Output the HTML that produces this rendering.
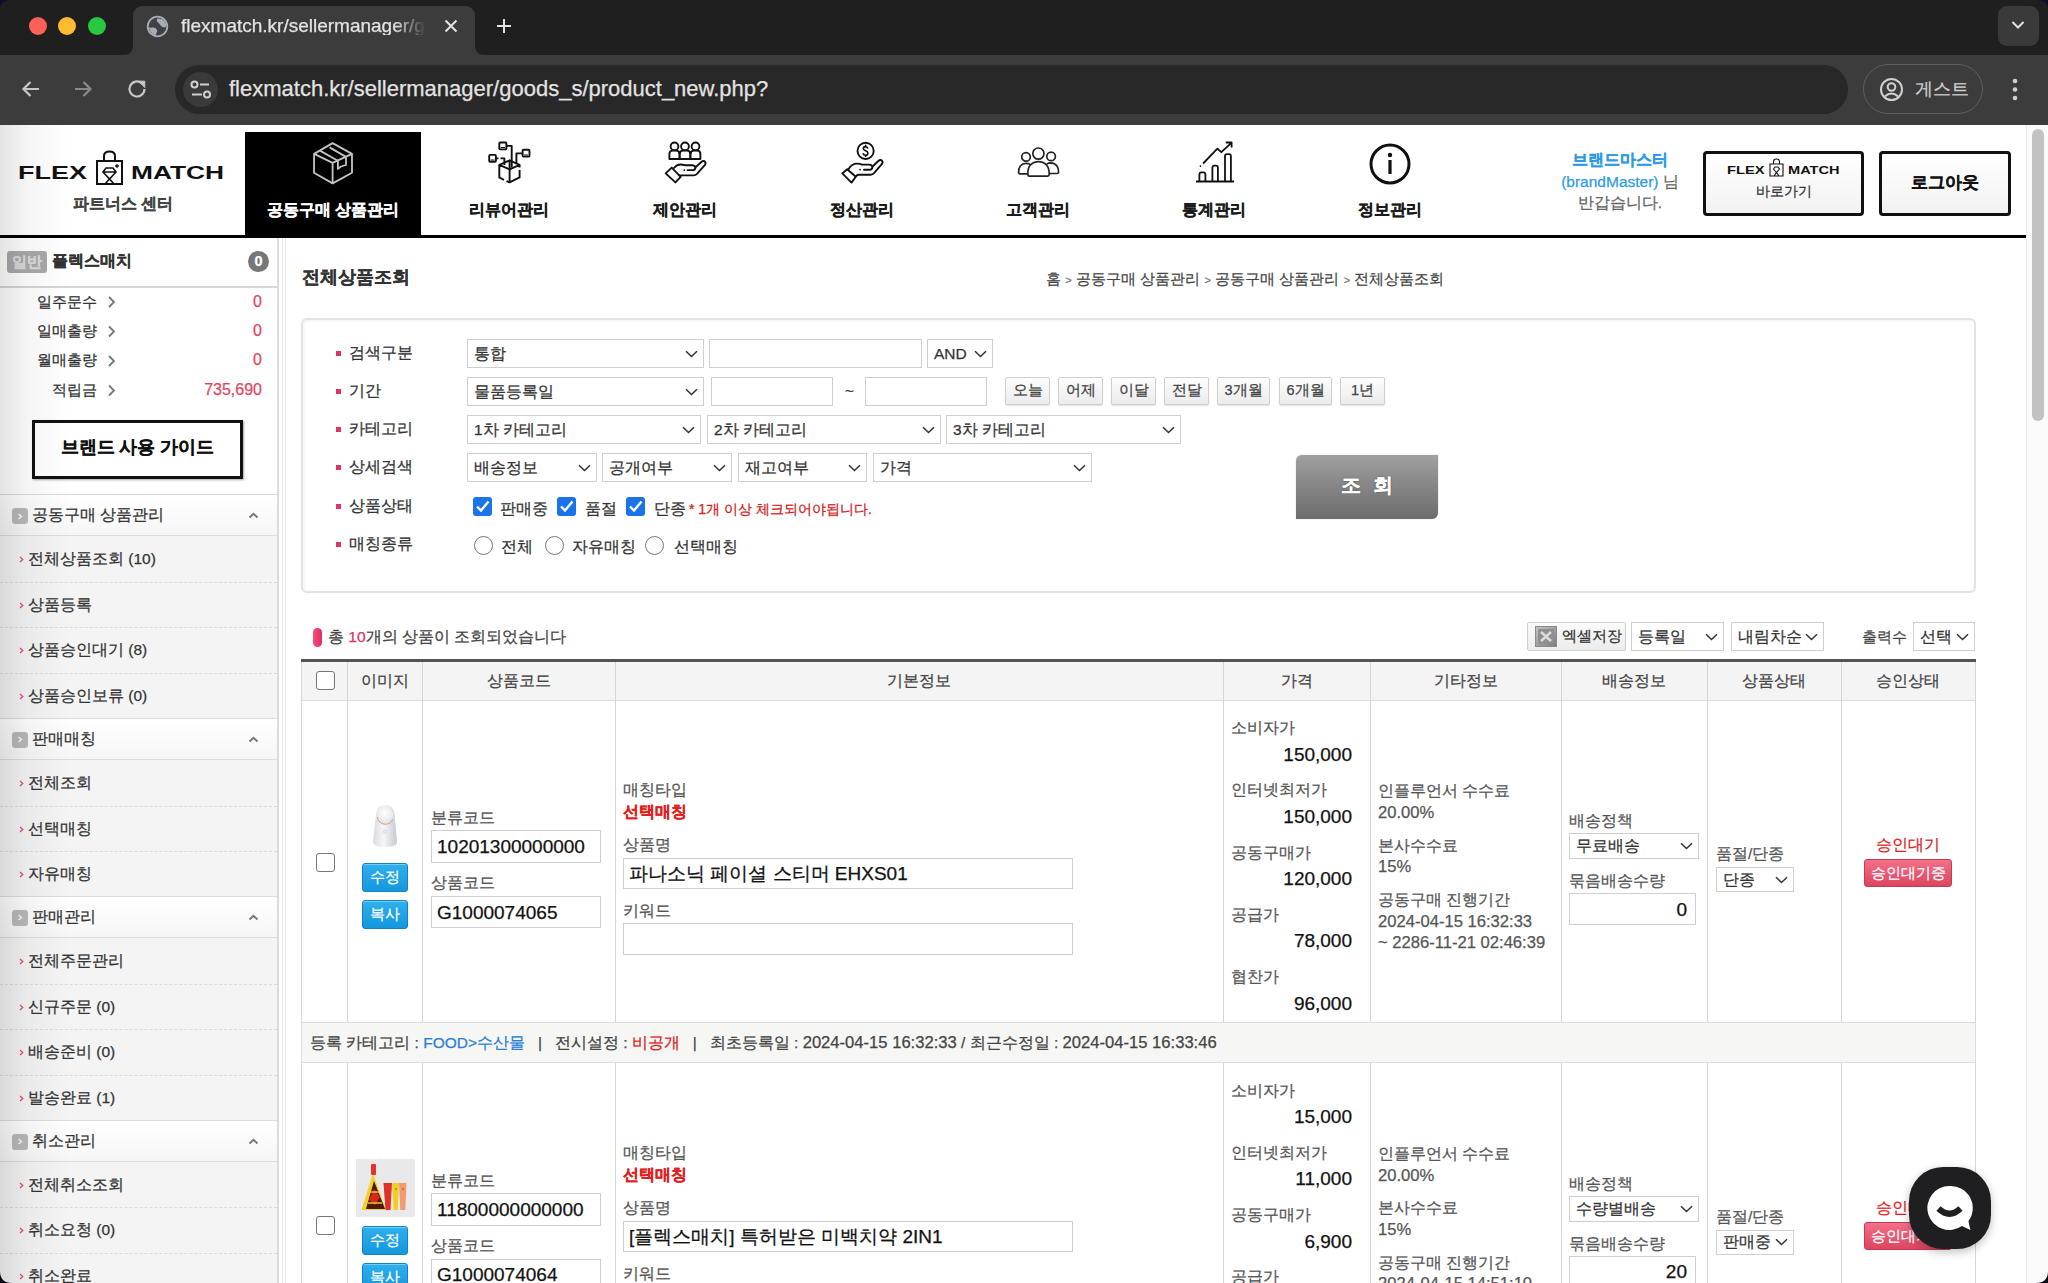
<!DOCTYPE html>
<html><head><meta charset="utf-8">
<style>
*{box-sizing:border-box;margin:0;padding:0}
html,body{width:2048px;height:1283px;overflow:hidden;background:#fff;font-family:"Liberation Sans",sans-serif;color:#333}
.a{position:absolute}
.t{position:absolute;white-space:nowrap;line-height:1;-webkit-text-stroke:0.25px currentColor}
/* chrome */
#tabs{left:0;top:0;width:2048px;height:55px;background:#1f1f1f}
#tb{left:0;top:55px;width:2048px;height:70px;background:#3c3c3c}
.dot{position:absolute;width:18px;height:18px;border-radius:50%}
#tab{left:133px;top:6px;width:342px;height:60px;background:#3c3c3c;border-radius:9px 9px 0 0}
#url{left:175px;top:65px;width:1673px;height:49px;background:#282828;border-radius:25px}
/* header */
.nav{position:absolute;top:132px;width:176px;height:103px;text-align:center}
.nav .lb{position:absolute;left:0;width:100%;top:70px;font-size:15.5px;font-weight:bold;color:#1a1a1a;line-height:1;-webkit-text-stroke:0.3px currentColor}
.nav svg{position:absolute;left:50%;top:10px;transform:translateX(-50%)}
</style></head><body>
<!-- browser chrome -->
<div class="a" id="tabs"></div>
<div class="a" id="tb"></div>
<div class="a" id="tab"></div>
<div class="dot" style="left:29px;top:17px;background:#fe5f57"></div>
<div class="dot" style="left:58px;top:17px;background:#febc2e"></div>
<div class="dot" style="left:88px;top:17px;background:#28c840"></div>
<svg class="a" style="left:123px;top:45px" width="10" height="10" viewBox="0 0 10 10"><path d="M10 0V10H0Q10 10 10 0Z" fill="#3c3c3c"/></svg>
<svg class="a" style="left:475px;top:45px" width="10" height="10" viewBox="0 0 10 10"><path d="M0 0V10H10Q0 10 0 0Z" fill="#3c3c3c"/></svg>
<div class="a" id="url"></div>
<!-- tab contents -->
<svg class="a" style="left:146px;top:15px" width="23" height="23" viewBox="0 0 23 23"><circle cx="11.5" cy="11.5" r="9" fill="#3e4146"/><path d="M11.5 3.5Q16 3 19 6.5Q20.5 9 20 11.5Q18.5 13 16.5 12Q14.5 11 13.5 9Q12.5 7.5 11 6.5Q10 5 11.5 3.5Z" fill="#a9acb1"/><path d="M3.2 12Q4.5 13 6.5 12.5Q9 12 10.5 14Q12 16 10.5 18Q9.5 19.5 9.8 20.3Q6 19.5 4 16Q3.2 14 3.2 12Z" fill="#a9acb1"/><circle cx="11.5" cy="11.5" r="9.8" stroke="#a9acb1" stroke-width="1.8" fill="none"/></svg>
<div class="t" style="left:181px;top:16px;font-size:19px;color:#e3e3e3;width:250px;overflow:hidden;-webkit-mask-image:linear-gradient(to right,#000 85%,transparent 98%)">flexmatch.kr/sellermanager/goods_s/</div>
<svg class="a" style="left:444px;top:19px" width="14" height="14" viewBox="0 0 14 14"><path d="M1.5 1.5L12.5 12.5M12.5 1.5L1.5 12.5" stroke="#e3e3e3" stroke-width="2"/></svg>
<svg class="a" style="left:496px;top:18px" width="16" height="16" viewBox="0 0 16 16"><path d="M8 1V15M1 8H15" stroke="#e3e3e3" stroke-width="2"/></svg>
<div class="a" style="left:1998px;top:6px;width:41px;height:40px;border-radius:9px;background:#3a3a3a"></div>
<svg class="a" style="left:2011px;top:20px" width="14" height="10" viewBox="0 0 14 10"><path d="M1.5 2L7 7.5L12.5 2" stroke="#e3e3e3" stroke-width="2" fill="none"/></svg>
<!-- toolbar -->
<svg class="a" style="left:21px;top:79px" width="20" height="20" viewBox="0 0 20 20"><path d="M18 10H3M9.5 3L2.5 10L9.5 17" stroke="#c7c7c7" stroke-width="2.2" fill="none"/></svg>
<svg class="a" style="left:73px;top:79px" width="20" height="20" viewBox="0 0 20 20"><path d="M2 10H17M10.5 3L17.5 10L10.5 17" stroke="#8a8a8a" stroke-width="2.2" fill="none"/></svg>
<svg class="a" style="left:126px;top:78px" width="22" height="22" viewBox="0 0 22 22"><path d="M18.5 11A7.5 7.5 0 1 1 15.8 5.2" stroke="#c7c7c7" stroke-width="2.2" fill="none"/><path d="M12.5 3.2H18.8V9.5Z" fill="#c7c7c7" stroke="#c7c7c7" stroke-width="1"/></svg>
<div class="a" style="left:183px;top:72px;width:35px;height:35px;border-radius:50%;background:#3a3a3a"></div>
<svg class="a" style="left:188px;top:78px" width="26" height="24" viewBox="0 0 26 24"><circle cx="6.5" cy="6.5" r="3" stroke="#d0d0d0" stroke-width="2" fill="none"/><path d="M12 6.5H21M4 16.5H14" stroke="#d0d0d0" stroke-width="2.2"/><circle cx="19" cy="16.5" r="3" stroke="#d0d0d0" stroke-width="2" fill="none"/></svg>
<div class="t" style="left:229px;top:78px;font-size:22px;color:#e3e3e3">flexmatch.kr/sellermanager/goods_s/product_new.php?</div>
<div class="a" style="left:1863px;top:64px;width:120px;height:50px;border-radius:25px;border:1.5px solid #5f5f5f"></div>
<svg class="a" style="left:1879px;top:77px" width="25" height="25" viewBox="0 0 25 25"><circle cx="12.5" cy="12.5" r="10.5" stroke="#d0d0d0" stroke-width="2" fill="none"/><circle cx="12.5" cy="10" r="3.8" stroke="#d0d0d0" stroke-width="2" fill="none"/><path d="M5.8 19.5Q12.5 13.5 19.2 19.5" stroke="#d0d0d0" stroke-width="2" fill="none"/></svg>
<div class="t" style="left:1915px;top:80px;font-size:18px;color:#d0d0d0">게스트</div>
<svg class="a" style="left:2011px;top:78px" width="8" height="24" viewBox="0 0 8 24"><circle cx="4" cy="3" r="2.3" fill="#d0d0d0"/><circle cx="4" cy="11.5" r="2.3" fill="#d0d0d0"/><circle cx="4" cy="20" r="2.3" fill="#d0d0d0"/></svg>


<!-- page header -->
<div class="a" style="left:245px;top:132px;width:176px;height:103px;background:#000"></div>
<div class="a" style="left:0;top:235px;width:2026px;height:3px;background:#000"></div>
<!-- logo -->
<svg class="a" style="left:0;top:150px" width="90" height="36"><text x="18" y="28.5" font-family="Liberation Sans" font-weight="bold" font-size="18" fill="#111" textLength="69" lengthAdjust="spacingAndGlyphs">FLEX</text></svg>
<svg class="a" style="left:95px;top:150px" width="29" height="36" viewBox="0 0 29 36"><path d="M2 11H27V34H2Z" stroke="#111" stroke-width="2" fill="none"/><path d="M9 11V6Q9 1.5 14.5 1.5Q20 1.5 20 6V11" stroke="#111" stroke-width="2" fill="none"/><path d="M8 22L11 18H18L21 22L14.5 29Z M8 22H21 M10 34L14.5 29L19 34" stroke="#111" stroke-width="1.6" fill="none"/><path d="M22 14V18M20 16H24" stroke="#111" stroke-width="1.3"/></svg>
<svg class="a" style="left:120px;top:150px" width="110" height="36"><text x="11" y="28.5" font-family="Liberation Sans" font-weight="bold" font-size="18" fill="#111" textLength="93" lengthAdjust="spacingAndGlyphs">MATCH</text></svg>
<div class="t" style="left:73px;top:196px;font-size:15.5px;font-weight:bold;color:#444">파트너스 센터</div>
<!-- nav -->
<div class="nav" style="left:245px"><svg width="46" height="46" viewBox="0 0 46 46" style="top:9px"><g stroke="#c4c4c4" stroke-width="1.8" fill="none" stroke-linejoin="round"><path d="M4.1 12.9L22.6 2.1L42 12.9V31.7L22.6 42.4L4 31.7Z"/><path d="M4.1 12.9L22.6 21.9L42 12.9M22.6 21.9V42.4"/><path d="M9.9 9.6L27.9 19.7M19.6 6.4L35.9 15.9"/><path d="M27.9 19.7V27.9L31 25.5L36 24V15.9"/></g></svg><div class="lb" style="color:#fff">공동구매 상품관리</div></div>
<div class="nav" style="left:421px"><svg width="46" height="46" viewBox="0 0 46 46" style="top:9px"><g stroke="#111" stroke-width="1.9" fill="none" stroke-linejoin="round"><path d="M23.6 19.3L13.3 23.8V36.4L18 39M20.5 40.2L23.6 41.4L33.6 36.4V29M33.6 26.5V23.8L23.6 19.3V41.4M13.3 23.8L23.6 28.3L33.6 23.8"/><path d="M20.4 4.9H25.7V26.6M36.6 12.4H30.4V21.9M9.9 17.4H12.5M14.5 17.4H18.4V24"/><rect x="13.3" y="1.5" width="7.1" height="6.9" rx="1"/><rect x="36.6" y="8.8" width="6.9" height="6.8" rx="1"/><rect x="3.2" y="13.9" width="6.7" height="6.9" rx="1"/><path d="M14.8 6.5H19M38 14H42M4.6 19H8.5" stroke-width="1.2"/></g></svg><div class="lb">리뷰어관리</div></div>
<div class="nav" style="left:597px"><svg width="46" height="46" viewBox="0 0 46 46" style="top:9px"><g stroke="#111" stroke-width="1.9" fill="none" stroke-linejoin="round" stroke-linecap="round"><circle cx="12.5" cy="5.4" r="3.9"/><circle cx="23" cy="5.4" r="3.9"/><circle cx="33.5" cy="5.4" r="3.9"/><path d="M7.4 18V13Q7.4 9.6 11 9.6H14Q17.4 9.6 17.4 13V18M17.8 18V13Q17.8 9.6 21 9.6H25Q28.2 9.6 28.2 13V18M28.6 18V13Q28.6 9.6 32 9.6H35Q38.4 9.6 38.4 13V18Z M7.4 18H38.4"/><path d="M3.7 32.4L9.7 26.6L18.7 35.8L13.4 41.4Z"/><path d="M11.9 27Q15 23.3 19 23.5Q22 24.2 24 24.2H30.3Q33.3 24.5 33.4 27Q33 29.1 30.5 29.1H25.6"/><path d="M17.6 34.4H31.6Q33.6 34.3 35 32.8L43.2 23.6Q44.2 21.5 42.5 20.2Q41 19.5 39.6 20.8L34.1 25.7"/><circle cx="22.3" cy="29.2" r="0.9" fill="#111" stroke="none"/></g></svg><div class="lb">제안관리</div></div>
<div class="nav" style="left:774px"><svg width="46" height="46" viewBox="0 0 46 46" style="top:9px"><g stroke="#111" stroke-width="1.9" fill="none" stroke-linejoin="round" stroke-linecap="round"><circle cx="26.6" cy="9.9" r="8.1"/><path d="M28.7 7Q28 5.6 26.5 5.6Q24.3 5.7 24.3 7.4Q24.4 9 26.6 9.8Q28.9 10.6 28.9 12.4Q28.8 14.2 26.6 14.2Q25 14.2 24.3 12.8M26.6 4.3V5.6M26.6 14.2V15.5" stroke-width="1.6"/><path d="M3.3 32.4L8.2 28.3L16.8 35.8L12.5 41.6Z"/><path d="M9.6 28Q13 22.5 18 22.6Q21 22.8 23 23.6H30.3Q33.3 23.9 33.4 26.3Q33 28.7 30.5 28.7H25"/><path d="M16.8 35.4Q18 34 19.5 33.8H31.6Q33.6 33.7 35 32.2L43.2 22.6Q44.2 20.5 42.5 19.2Q41 18.5 39.6 19.8L34.1 25"/><circle cx="21" cy="28.6" r="0.9" fill="#111" stroke="none"/></g></svg><div class="lb">정산관리</div></div>
<div class="nav" style="left:950px"><svg width="46" height="46" viewBox="0 0 46 46" style="top:9px"><g stroke="#222" stroke-width="1.7" fill="none" stroke-linejoin="round"><circle cx="23.4" cy="12.6" r="5.6"/><circle cx="11" cy="15.9" r="4.3"/><circle cx="36.1" cy="15.4" r="4.3"/><path d="M14.2 35.1Q13 35 12.9 33.6Q12.5 27 15.5 24Q18.5 20.6 23.4 20.6Q28.5 20.6 31.5 24Q34.3 27 34.2 33.6Q34 35 32.8 35.1Z"/><path d="M15.3 23.6Q13.5 22.3 11 22.3Q7.5 22.3 5.3 25Q3.5 27.5 3.6 31.6Q3.8 32.8 5 32.8H12.9"/><path d="M31.6 23.1Q33.5 21.9 35.9 21.9Q39.5 22 41.7 24.6Q43.5 27 43.6 31.4Q43.4 32.5 42.3 32.5H34.2"/></g></svg><div class="lb">고객관리</div></div>
<div class="nav" style="left:1126px"><svg width="46" height="46" viewBox="0 0 46 46" style="top:9px"><g stroke="#111" stroke-width="1.8" fill="none" stroke-linejoin="round"><path d="M5 40.5H43.1"/><path d="M8.4 40.5V33.3Q8.4 31.3 10.4 31.3H12.4Q14.4 31.3 14.4 33.3V40.5M21.4 40.5V26.6Q21.4 24.6 23.4 24.6H24.9Q26.9 24.6 26.9 26.6V40.5M34 40.5V15.1Q34 13.1 36 13.1H37.9Q39.9 13.1 39.9 15.1V40.5"/><path d="M12.1 22.5L26.4 7.7L30.3 11.1L40.4 1.9M34.8 1.5H40.6V6.4"/></g><circle cx="9.5" cy="25.1" r="0.9" fill="#111"/></svg><div class="lb">통계관리</div></div>
<div class="nav" style="left:1302px"><svg width="46" height="46" viewBox="0 0 46 46" style="top:9px"><circle cx="23" cy="23" r="19" stroke="#111" stroke-width="3" fill="none"/><circle cx="23" cy="14" r="2.2" fill="#111"/><path d="M23 19V33" stroke="#111" stroke-width="3.2"/></svg><div class="lb">정보관리</div></div>
<!-- right header -->
<div class="t" style="left:1560px;top:152px;width:120px;text-align:center;font-size:15.5px;font-weight:bold;color:#2e9ae6">브랜드마스터</div>
<div class="t" style="left:1540px;top:174px;width:160px;text-align:center;font-size:15.5px;color:#666"><span style="color:#2e9ae6">(brandMaster)</span> 님</div>
<div class="t" style="left:1540px;top:195px;width:160px;text-align:center;font-size:15.5px;color:#666">반갑습니다.</div>
<div class="a" style="left:1703px;top:151px;width:161px;height:65px;border:3px solid #111;border-radius:4px;background:linear-gradient(#fff,#f2f2f2)"></div>
<svg class="a" style="left:1720px;top:160px" width="50" height="20"><text x="7" y="14" font-family="Liberation Sans" font-weight="bold" font-size="10.5" fill="#111" textLength="37.5" lengthAdjust="spacingAndGlyphs">FLEX</text></svg>
<svg class="a" style="left:1769px;top:158px" width="15" height="19" viewBox="0 0 15 19"><path d="M1 6H14V18H1Z M4.5 6V3.5Q4.5 1 7.5 1Q10.5 1 10.5 3.5V6 M4.5 11L6 9H9L10.5 11L7.5 14.5Z M5 18L7.5 14.5L10 18" stroke="#111" stroke-width="1.1" fill="none"/></svg>
<svg class="a" style="left:1780px;top:160px" width="70" height="20"><text x="8" y="14" font-family="Liberation Sans" font-weight="bold" font-size="10.5" fill="#111" textLength="51.5" lengthAdjust="spacingAndGlyphs">MATCH</text></svg>
<div class="t" style="left:1703px;top:184px;width:161px;text-align:center;font-size:14px;color:#333">바로가기</div>
<div class="a" style="left:1879px;top:151px;width:132px;height:65px;border:3px solid #111;border-radius:4px;background:linear-gradient(#fff,#f2f2f2)"></div>
<div class="t" style="left:1879px;top:174px;width:132px;text-align:center;font-size:17px;font-weight:bold;color:#111">로그아웃</div>
<!-- scrollbar -->
<div class="a" style="left:2026px;top:125px;width:22px;height:1158px;background:#fafafa;border-left:1px solid #e8e8e8"></div>
<div class="a" style="left:2032px;top:129px;width:12px;height:292px;border-radius:6px;background:#c2c2c2"></div>

<!-- sidebar -->
<div class="a" style="left:277px;top:238px;width:1.5px;height:1045px;background:#dcdcdc"></div>
<div class="a" style="left:282px;top:238px;width:1px;height:1045px;background:#e6e6e6"></div>
<div class="a" style="left:285px;top:238px;width:1.2px;height:1045px;background:#e6e6e6"></div>
<div class="a" style="left:7px;top:251px;width:40px;height:22px;border-radius:3px;background:#a9a9a9"></div>
<div class="t" style="left:7px;top:254px;width:40px;text-align:center;font-size:15px;font-weight:bold;color:#d9d9d9">일반</div>
<div class="t" style="left:52px;top:253px;font-size:15.5px;font-weight:bold;color:#333">플렉스매치</div>
<div class="a" style="left:248px;top:251px;width:21px;height:21px;border-radius:50%;background:#777"></div>
<div class="t" style="left:248px;top:254px;width:21px;text-align:center;font-size:14.5px;font-weight:bold;color:#fff">0</div>
<div class="a" style="left:0;top:286px;width:277px;height:2px;background:#d6d6d6"></div>
<div class="a" style="left:0;top:288px;width:277px;height:206px;background:#fff"></div>
<div class="t" style="left:37px;top:294px;font-size:15px;color:#333">일주문수</div>
<div class="t" style="left:37px;top:323px;font-size:15px;color:#333">일매출량</div>
<div class="t" style="left:37px;top:352px;font-size:15px;color:#333">월매출량</div>
<div class="t" style="left:52px;top:382px;font-size:15px;color:#333">적립금</div>
<svg class="a" style="left:107px;top:296px" width="10" height="104" viewBox="0 0 10 104"><g stroke="#777" stroke-width="1.8" fill="none"><path d="M2 1L7 6L2 11"/><path d="M2 30.5L7 35.5L2 40.5"/><path d="M2 60L7 65L2 70"/><path d="M2 89.5L7 94.5L2 99.5"/></g></svg>
<div class="t" style="left:160px;top:294px;width:102px;text-align:right;font-size:16px;color:#e0475f">0</div>
<div class="t" style="left:160px;top:323px;width:102px;text-align:right;font-size:16px;color:#e0475f">0</div>
<div class="t" style="left:160px;top:352px;width:102px;text-align:right;font-size:16px;color:#e0475f">0</div>
<div class="t" style="left:160px;top:382px;width:102px;text-align:right;font-size:16px;color:#e0475f">735,690</div>
<div class="a" style="left:32px;top:420px;width:211px;height:59px;border:3px solid #111;background:#fff;box-shadow:1px 1px 2px rgba(0,0,0,.35)"></div>
<div class="t" style="left:32px;top:439px;width:211px;text-align:center;font-size:17.5px;font-weight:bold;color:#111">브랜드 사용 가이드</div>
<div class="a" style="left:0;top:494px;width:277px;height:1.5px;background:#d8d8d8"></div>
<div class="a" style="left:0;top:495.0px;width:277px;height:41px;background:linear-gradient(#fff,#f6f6f6);border-bottom:1.5px solid #dcdcdc"></div>
<div class="a" style="left:12px;top:508.0px;width:16px;height:16px;border-radius:3px;background:#b9b9b9"></div>
<svg class="a" style="left:17px;top:512.5px" width="6" height="7" viewBox="0 0 6 7"><path d="M1.5 1L4.5 3.5L1.5 6" stroke="#fff" stroke-width="1.3" fill="none"/></svg>
<div class="t" style="left:32px;top:507.0px;font-size:15.5px;color:#333">공동구매 상품관리</div>
<svg class="a" style="left:248px;top:512.0px" width="11" height="7" viewBox="0 0 11 7"><path d="M1.5 5.5L5.5 1.8L9.5 5.5" stroke="#777" stroke-width="2" fill="none"/></svg>
<div class="a" style="left:0;top:536.0px;width:277px;height:182.8px;background:#f4f4f4"></div>
<svg class="a" style="left:19px;top:556.0px" width="5" height="7" viewBox="0 0 5 7"><path d="M1 1L3.8 3.5L1 6" stroke="#e8456a" stroke-width="1.2" fill="none"/></svg>
<div class="t" style="left:28px;top:551.0px;font-size:15.5px;color:#333">전체상품조회 (10)</div>
<div class="a" style="left:0;top:581.7px;width:277px;height:1px;border-top:1px dashed #dadada"></div>
<svg class="a" style="left:19px;top:601.7px" width="5" height="7" viewBox="0 0 5 7"><path d="M1 1L3.8 3.5L1 6" stroke="#e8456a" stroke-width="1.2" fill="none"/></svg>
<div class="t" style="left:28px;top:596.7px;font-size:15.5px;color:#333">상품등록</div>
<div class="a" style="left:0;top:627.4px;width:277px;height:1px;border-top:1px dashed #dadada"></div>
<svg class="a" style="left:19px;top:647.4px" width="5" height="7" viewBox="0 0 5 7"><path d="M1 1L3.8 3.5L1 6" stroke="#e8456a" stroke-width="1.2" fill="none"/></svg>
<div class="t" style="left:28px;top:642.4px;font-size:15.5px;color:#333">상품승인대기 (8)</div>
<div class="a" style="left:0;top:673.1px;width:277px;height:1px;border-top:1px dashed #dadada"></div>
<svg class="a" style="left:19px;top:693.1px" width="5" height="7" viewBox="0 0 5 7"><path d="M1 1L3.8 3.5L1 6" stroke="#e8456a" stroke-width="1.2" fill="none"/></svg>
<div class="t" style="left:28px;top:688.1px;font-size:15.5px;color:#333">상품승인보류 (0)</div>
<div class="a" style="left:0;top:717.8px;width:277px;height:1.5px;background:#dcdcdc"></div>
<div class="a" style="left:0;top:718.8px;width:277px;height:41px;background:linear-gradient(#fff,#f6f6f6);border-bottom:1.5px solid #dcdcdc"></div>
<div class="a" style="left:12px;top:731.8px;width:16px;height:16px;border-radius:3px;background:#b9b9b9"></div>
<svg class="a" style="left:17px;top:736.3px" width="6" height="7" viewBox="0 0 6 7"><path d="M1.5 1L4.5 3.5L1.5 6" stroke="#fff" stroke-width="1.3" fill="none"/></svg>
<div class="t" style="left:32px;top:730.8px;font-size:15.5px;color:#333">판매매칭</div>
<svg class="a" style="left:248px;top:735.8px" width="11" height="7" viewBox="0 0 11 7"><path d="M1.5 5.5L5.5 1.8L9.5 5.5" stroke="#777" stroke-width="2" fill="none"/></svg>
<div class="a" style="left:0;top:759.8px;width:277px;height:137.1px;background:#f4f4f4"></div>
<svg class="a" style="left:19px;top:779.8px" width="5" height="7" viewBox="0 0 5 7"><path d="M1 1L3.8 3.5L1 6" stroke="#e8456a" stroke-width="1.2" fill="none"/></svg>
<div class="t" style="left:28px;top:774.8px;font-size:15.5px;color:#333">전체조회</div>
<div class="a" style="left:0;top:805.5px;width:277px;height:1px;border-top:1px dashed #dadada"></div>
<svg class="a" style="left:19px;top:825.5px" width="5" height="7" viewBox="0 0 5 7"><path d="M1 1L3.8 3.5L1 6" stroke="#e8456a" stroke-width="1.2" fill="none"/></svg>
<div class="t" style="left:28px;top:820.5px;font-size:15.5px;color:#333">선택매칭</div>
<div class="a" style="left:0;top:851.2px;width:277px;height:1px;border-top:1px dashed #dadada"></div>
<svg class="a" style="left:19px;top:871.2px" width="5" height="7" viewBox="0 0 5 7"><path d="M1 1L3.8 3.5L1 6" stroke="#e8456a" stroke-width="1.2" fill="none"/></svg>
<div class="t" style="left:28px;top:866.2px;font-size:15.5px;color:#333">자유매칭</div>
<div class="a" style="left:0;top:895.9px;width:277px;height:1.5px;background:#dcdcdc"></div>
<div class="a" style="left:0;top:896.9px;width:277px;height:41px;background:linear-gradient(#fff,#f6f6f6);border-bottom:1.5px solid #dcdcdc"></div>
<div class="a" style="left:12px;top:909.9px;width:16px;height:16px;border-radius:3px;background:#b9b9b9"></div>
<svg class="a" style="left:17px;top:914.4px" width="6" height="7" viewBox="0 0 6 7"><path d="M1.5 1L4.5 3.5L1.5 6" stroke="#fff" stroke-width="1.3" fill="none"/></svg>
<div class="t" style="left:32px;top:908.9px;font-size:15.5px;color:#333">판매관리</div>
<svg class="a" style="left:248px;top:913.9px" width="11" height="7" viewBox="0 0 11 7"><path d="M1.5 5.5L5.5 1.8L9.5 5.5" stroke="#777" stroke-width="2" fill="none"/></svg>
<div class="a" style="left:0;top:937.9px;width:277px;height:182.8px;background:#f4f4f4"></div>
<svg class="a" style="left:19px;top:957.9px" width="5" height="7" viewBox="0 0 5 7"><path d="M1 1L3.8 3.5L1 6" stroke="#e8456a" stroke-width="1.2" fill="none"/></svg>
<div class="t" style="left:28px;top:952.9px;font-size:15.5px;color:#333">전체주문관리</div>
<div class="a" style="left:0;top:983.6px;width:277px;height:1px;border-top:1px dashed #dadada"></div>
<svg class="a" style="left:19px;top:1003.6px" width="5" height="7" viewBox="0 0 5 7"><path d="M1 1L3.8 3.5L1 6" stroke="#e8456a" stroke-width="1.2" fill="none"/></svg>
<div class="t" style="left:28px;top:998.6px;font-size:15.5px;color:#333">신규주문 (0)</div>
<div class="a" style="left:0;top:1029.3px;width:277px;height:1px;border-top:1px dashed #dadada"></div>
<svg class="a" style="left:19px;top:1049.3px" width="5" height="7" viewBox="0 0 5 7"><path d="M1 1L3.8 3.5L1 6" stroke="#e8456a" stroke-width="1.2" fill="none"/></svg>
<div class="t" style="left:28px;top:1044.3px;font-size:15.5px;color:#333">배송준비 (0)</div>
<div class="a" style="left:0;top:1075.0px;width:277px;height:1px;border-top:1px dashed #dadada"></div>
<svg class="a" style="left:19px;top:1095.0px" width="5" height="7" viewBox="0 0 5 7"><path d="M1 1L3.8 3.5L1 6" stroke="#e8456a" stroke-width="1.2" fill="none"/></svg>
<div class="t" style="left:28px;top:1090.0px;font-size:15.5px;color:#333">발송완료 (1)</div>
<div class="a" style="left:0;top:1119.7px;width:277px;height:1.5px;background:#dcdcdc"></div>
<div class="a" style="left:0;top:1120.7px;width:277px;height:41px;background:linear-gradient(#fff,#f6f6f6);border-bottom:1.5px solid #dcdcdc"></div>
<div class="a" style="left:12px;top:1133.7px;width:16px;height:16px;border-radius:3px;background:#b9b9b9"></div>
<svg class="a" style="left:17px;top:1138.2px" width="6" height="7" viewBox="0 0 6 7"><path d="M1.5 1L4.5 3.5L1.5 6" stroke="#fff" stroke-width="1.3" fill="none"/></svg>
<div class="t" style="left:32px;top:1132.7px;font-size:15.5px;color:#333">취소관리</div>
<svg class="a" style="left:248px;top:1137.7px" width="11" height="7" viewBox="0 0 11 7"><path d="M1.5 5.5L5.5 1.8L9.5 5.5" stroke="#777" stroke-width="2" fill="none"/></svg>
<div class="a" style="left:0;top:1161.7px;width:277px;height:137.1px;background:#f4f4f4"></div>
<svg class="a" style="left:19px;top:1181.7px" width="5" height="7" viewBox="0 0 5 7"><path d="M1 1L3.8 3.5L1 6" stroke="#e8456a" stroke-width="1.2" fill="none"/></svg>
<div class="t" style="left:28px;top:1176.7px;font-size:15.5px;color:#333">전체취소조회</div>
<div class="a" style="left:0;top:1207.4px;width:277px;height:1px;border-top:1px dashed #dadada"></div>
<svg class="a" style="left:19px;top:1227.4px" width="5" height="7" viewBox="0 0 5 7"><path d="M1 1L3.8 3.5L1 6" stroke="#e8456a" stroke-width="1.2" fill="none"/></svg>
<div class="t" style="left:28px;top:1222.4px;font-size:15.5px;color:#333">취소요청 (0)</div>
<div class="a" style="left:0;top:1253.1px;width:277px;height:1px;border-top:1px dashed #dadada"></div>
<svg class="a" style="left:19px;top:1273.1px" width="5" height="7" viewBox="0 0 5 7"><path d="M1 1L3.8 3.5L1 6" stroke="#e8456a" stroke-width="1.2" fill="none"/></svg>
<div class="t" style="left:28px;top:1268.1px;font-size:15.5px;color:#333">취소완료</div>
<div class="a" style="left:0;top:1297.8px;width:277px;height:1.5px;background:#dcdcdc"></div>

<div class="a" style="left:0;top:125px;width:70px;height:1158px;background:linear-gradient(to right,rgba(0,0,0,.11),rgba(0,0,0,.04) 40%,rgba(0,0,0,0))"></div>

<!-- content -->
<div class="t" style="left:302px;top:269px;font-size:17.5px;font-weight:bold;color:#333">전체상품조회</div>
<div class="t" style="left:1046px;top:271px;font-size:15.3px;color:#444">홈 <span style="font-size:11px;color:#777">&gt;</span> 공동구매 상품관리 <span style="font-size:11px;color:#777">&gt;</span> 공동구매 상품관리 <span style="font-size:11px;color:#777">&gt;</span> 전체상품조회</div>
<div class="a" style="left:301px;top:318px;width:1675px;height:275px;border:2.5px solid #e3e3e3;border-radius:6px;box-shadow:inset 1px 1px 3px rgba(0,0,0,.06)"></div>
<div class="a" style="left:336px;top:351px;width:5px;height:5px;background:#e0336a"></div>
<div class="t" style="left:349px;top:345px;font-size:15.5px;color:#333">검색구분</div>
<div class="a" style="left:336px;top:389px;width:5px;height:5px;background:#e0336a"></div>
<div class="t" style="left:349px;top:383px;font-size:15.5px;color:#333">기간</div>
<div class="a" style="left:336px;top:427px;width:5px;height:5px;background:#e0336a"></div>
<div class="t" style="left:349px;top:421px;font-size:15.5px;color:#333">카테고리</div>
<div class="a" style="left:336px;top:465px;width:5px;height:5px;background:#e0336a"></div>
<div class="t" style="left:349px;top:459px;font-size:15.5px;color:#333">상세검색</div>
<div class="a" style="left:336px;top:504px;width:5px;height:5px;background:#e0336a"></div>
<div class="t" style="left:349px;top:498px;font-size:15.5px;color:#333">상품상태</div>
<div class="a" style="left:336px;top:542px;width:5px;height:5px;background:#e0336a"></div>
<div class="t" style="left:349px;top:536px;font-size:15.5px;color:#333">매칭종류</div>
<div class="a" style="left:467px;top:339px;width:237px;height:29px;border:1.5px solid #cfcfcf;background:#fff"></div>
<div class="t" style="left:474px;top:345.5px;font-size:15.5px;color:#333">통합</div>
<svg class="a" style="left:685px;top:349.5px" width="13" height="8" viewBox="0 0 13 8"><path d="M1 1.2L6.5 6.5L12 1.2" stroke="#333" stroke-width="1.5" fill="none"/></svg>
<div class="a" style="left:709px;top:339px;width:213px;height:29px;border:1.5px solid #cfcfcf;background:#fff"></div>
<div class="a" style="left:927px;top:339px;width:66px;height:29px;border:1.5px solid #cfcfcf;background:#fff"></div>
<div class="t" style="left:934px;top:345.5px;font-size:15.5px;color:#333">AND</div>
<svg class="a" style="left:974px;top:349.5px" width="13" height="8" viewBox="0 0 13 8"><path d="M1 1.2L6.5 6.5L12 1.2" stroke="#333" stroke-width="1.5" fill="none"/></svg>
<div class="a" style="left:467px;top:377px;width:237px;height:29px;border:1.5px solid #cfcfcf;background:#fff"></div>
<div class="t" style="left:474px;top:383.5px;font-size:15.5px;color:#333">물품등록일</div>
<svg class="a" style="left:685px;top:387.5px" width="13" height="8" viewBox="0 0 13 8"><path d="M1 1.2L6.5 6.5L12 1.2" stroke="#333" stroke-width="1.5" fill="none"/></svg>
<div class="a" style="left:711px;top:377px;width:122px;height:29px;border:1.5px solid #cfcfcf;background:#fff"></div>
<div class="t" style="left:845px;top:383px;font-size:15px;color:#333">~</div>
<div class="a" style="left:865px;top:377px;width:122px;height:29px;border:1.5px solid #cfcfcf;background:#fff"></div>
<div class="a" style="left:1005px;top:377px;width:45px;height:28px;border:1px solid #cfcfcf;border-radius:2px;background:linear-gradient(#fdfdfd,#ececec);box-shadow:0 1px 1px rgba(0,0,0,.12)"></div>
<div class="t" style="left:1005px;top:383px;width:45px;text-align:center;font-size:14.5px;color:#444">오늘</div>
<div class="a" style="left:1058px;top:377px;width:45px;height:28px;border:1px solid #cfcfcf;border-radius:2px;background:linear-gradient(#fdfdfd,#ececec);box-shadow:0 1px 1px rgba(0,0,0,.12)"></div>
<div class="t" style="left:1058px;top:383px;width:45px;text-align:center;font-size:14.5px;color:#444">어제</div>
<div class="a" style="left:1111px;top:377px;width:45px;height:28px;border:1px solid #cfcfcf;border-radius:2px;background:linear-gradient(#fdfdfd,#ececec);box-shadow:0 1px 1px rgba(0,0,0,.12)"></div>
<div class="t" style="left:1111px;top:383px;width:45px;text-align:center;font-size:14.5px;color:#444">이달</div>
<div class="a" style="left:1164px;top:377px;width:45px;height:28px;border:1px solid #cfcfcf;border-radius:2px;background:linear-gradient(#fdfdfd,#ececec);box-shadow:0 1px 1px rgba(0,0,0,.12)"></div>
<div class="t" style="left:1164px;top:383px;width:45px;text-align:center;font-size:14.5px;color:#444">전달</div>
<div class="a" style="left:1217px;top:377px;width:53px;height:28px;border:1px solid #cfcfcf;border-radius:2px;background:linear-gradient(#fdfdfd,#ececec);box-shadow:0 1px 1px rgba(0,0,0,.12)"></div>
<div class="t" style="left:1217px;top:383px;width:53px;text-align:center;font-size:14.5px;color:#444">3개월</div>
<div class="a" style="left:1279px;top:377px;width:53px;height:28px;border:1px solid #cfcfcf;border-radius:2px;background:linear-gradient(#fdfdfd,#ececec);box-shadow:0 1px 1px rgba(0,0,0,.12)"></div>
<div class="t" style="left:1279px;top:383px;width:53px;text-align:center;font-size:14.5px;color:#444">6개월</div>
<div class="a" style="left:1340px;top:377px;width:45px;height:28px;border:1px solid #cfcfcf;border-radius:2px;background:linear-gradient(#fdfdfd,#ececec);box-shadow:0 1px 1px rgba(0,0,0,.12)"></div>
<div class="t" style="left:1340px;top:383px;width:45px;text-align:center;font-size:14.5px;color:#444">1년</div>
<div class="a" style="left:467px;top:415px;width:234px;height:29px;border:1.5px solid #cfcfcf;background:#fff"></div>
<div class="t" style="left:474px;top:421.5px;font-size:15.5px;color:#333">1차 카테고리</div>
<svg class="a" style="left:682px;top:425.5px" width="13" height="8" viewBox="0 0 13 8"><path d="M1 1.2L6.5 6.5L12 1.2" stroke="#333" stroke-width="1.5" fill="none"/></svg>
<div class="a" style="left:707px;top:415px;width:234px;height:29px;border:1.5px solid #cfcfcf;background:#fff"></div>
<div class="t" style="left:714px;top:421.5px;font-size:15.5px;color:#333">2차 카테고리</div>
<svg class="a" style="left:922px;top:425.5px" width="13" height="8" viewBox="0 0 13 8"><path d="M1 1.2L6.5 6.5L12 1.2" stroke="#333" stroke-width="1.5" fill="none"/></svg>
<div class="a" style="left:946px;top:415px;width:235px;height:29px;border:1.5px solid #cfcfcf;background:#fff"></div>
<div class="t" style="left:953px;top:421.5px;font-size:15.5px;color:#333">3차 카테고리</div>
<svg class="a" style="left:1162px;top:425.5px" width="13" height="8" viewBox="0 0 13 8"><path d="M1 1.2L6.5 6.5L12 1.2" stroke="#333" stroke-width="1.5" fill="none"/></svg>
<div class="a" style="left:467px;top:453px;width:130px;height:29px;border:1.5px solid #cfcfcf;background:#fff"></div>
<div class="t" style="left:474px;top:459.5px;font-size:15.5px;color:#333">배송정보</div>
<svg class="a" style="left:578px;top:463.5px" width="13" height="8" viewBox="0 0 13 8"><path d="M1 1.2L6.5 6.5L12 1.2" stroke="#333" stroke-width="1.5" fill="none"/></svg>
<div class="a" style="left:602px;top:453px;width:130px;height:29px;border:1.5px solid #cfcfcf;background:#fff"></div>
<div class="t" style="left:609px;top:459.5px;font-size:15.5px;color:#333">공개여부</div>
<svg class="a" style="left:713px;top:463.5px" width="13" height="8" viewBox="0 0 13 8"><path d="M1 1.2L6.5 6.5L12 1.2" stroke="#333" stroke-width="1.5" fill="none"/></svg>
<div class="a" style="left:738px;top:453px;width:129px;height:29px;border:1.5px solid #cfcfcf;background:#fff"></div>
<div class="t" style="left:745px;top:459.5px;font-size:15.5px;color:#333">재고여부</div>
<svg class="a" style="left:848px;top:463.5px" width="13" height="8" viewBox="0 0 13 8"><path d="M1 1.2L6.5 6.5L12 1.2" stroke="#333" stroke-width="1.5" fill="none"/></svg>
<div class="a" style="left:873px;top:453px;width:219px;height:29px;border:1.5px solid #cfcfcf;background:#fff"></div>
<div class="t" style="left:880px;top:459.5px;font-size:15.5px;color:#333">가격</div>
<svg class="a" style="left:1073px;top:463.5px" width="13" height="8" viewBox="0 0 13 8"><path d="M1 1.2L6.5 6.5L12 1.2" stroke="#333" stroke-width="1.5" fill="none"/></svg>
<div class="a" style="left:1296px;top:455px;width:142px;height:64px;border-radius:6px 0 6px 0;background:linear-gradient(#a0a0a0,#8a8a8a 40%,#6c6c6c);box-shadow:0 0 1px rgba(0,0,0,.4)"></div>
<div class="t" style="left:1296px;top:475px;width:142px;text-align:center;font-size:20px;font-weight:bold;color:#fff;letter-spacing:12px;text-indent:12px;text-shadow:0 0 2px rgba(0,0,0,.55)">조회</div>
<svg class="a" style="left:473px;top:497px" width="19" height="19" viewBox="0 0 19 19"><rect x="0" y="0" width="19" height="19" rx="3" fill="#1a73e8"/><path d="M4 9.5L8 13.5L15.5 4.5" stroke="#fff" stroke-width="2.4" fill="none"/></svg>
<div class="t" style="left:500px;top:501px;font-size:15.5px;color:#333">판매중</div>
<svg class="a" style="left:557px;top:497px" width="19" height="19" viewBox="0 0 19 19"><rect x="0" y="0" width="19" height="19" rx="3" fill="#1a73e8"/><path d="M4 9.5L8 13.5L15.5 4.5" stroke="#fff" stroke-width="2.4" fill="none"/></svg>
<div class="t" style="left:585px;top:501px;font-size:15.5px;color:#333">품절</div>
<svg class="a" style="left:626px;top:497px" width="19" height="19" viewBox="0 0 19 19"><rect x="0" y="0" width="19" height="19" rx="3" fill="#1a73e8"/><path d="M4 9.5L8 13.5L15.5 4.5" stroke="#fff" stroke-width="2.4" fill="none"/></svg>
<div class="t" style="left:654px;top:501px;font-size:15.5px;color:#333">단종</div>
<div class="t" style="left:689px;top:502px;font-size:14px;color:#d42020">* 1개 이상 체크되어야됩니다.</div>
<div class="a" style="left:474px;top:536px;width:19px;height:19px;border:1.5px solid #767676;border-radius:50%;background:#fff"></div>
<div class="t" style="left:501px;top:539px;font-size:15.5px;color:#333">전체</div>
<div class="a" style="left:545px;top:536px;width:19px;height:19px;border:1.5px solid #767676;border-radius:50%;background:#fff"></div>
<div class="t" style="left:572px;top:539px;font-size:15.5px;color:#333">자유매칭</div>
<div class="a" style="left:645px;top:536px;width:19px;height:19px;border:1.5px solid #767676;border-radius:50%;background:#fff"></div>
<div class="t" style="left:674px;top:539px;font-size:15.5px;color:#333">선택매칭</div>
<div class="a" style="left:313px;top:628px;width:9px;height:19px;border-radius:4.5px;background:linear-gradient(to right,#f0507e,#e02d60)"></div>
<div class="t" style="left:328px;top:629px;font-size:15.5px;color:#444">총 <span style="color:#e0336a">10</span>개의 상품이 조회되었습니다</div>
<div class="a" style="left:1527px;top:622px;width:99px;height:29px;border:1px solid #d0d0d0;border-radius:2px;background:linear-gradient(#fafafa,#ececec)"></div>
<svg class="a" style="left:1535px;top:626px" width="22" height="21" viewBox="0 0 22 21"><defs><linearGradient id="gx" x1="0" y1="0" x2="1" y2="1"><stop offset="0" stop-color="#c8c8c8"/><stop offset="1" stop-color="#7a7a7a"/></linearGradient></defs><rect x="0.5" y="0.5" width="21" height="20" fill="url(#gx)" stroke="#8a8a8a"/><rect x="3" y="3" width="16" height="15" fill="#8f8f8f"/><path d="M6 6L16 15M16 6L6 15" stroke="#dcdcdc" stroke-width="2.6"/></svg>
<div class="t" style="left:1562px;top:629px;font-size:14.5px;color:#333">엑셀저장</div>
<div class="a" style="left:1631px;top:622px;width:93px;height:29px;border:1.5px solid #cfcfcf;background:#fff"></div>
<div class="t" style="left:1638px;top:628.5px;font-size:15.5px;color:#333">등록일</div>
<svg class="a" style="left:1705px;top:632.5px" width="13" height="8" viewBox="0 0 13 8"><path d="M1 1.2L6.5 6.5L12 1.2" stroke="#333" stroke-width="1.5" fill="none"/></svg>
<div class="a" style="left:1731px;top:622px;width:93px;height:29px;border:1.5px solid #cfcfcf;background:#fff"></div>
<div class="t" style="left:1738px;top:628.5px;font-size:15.5px;color:#333">내림차순</div>
<svg class="a" style="left:1805px;top:632.5px" width="13" height="8" viewBox="0 0 13 8"><path d="M1 1.2L6.5 6.5L12 1.2" stroke="#333" stroke-width="1.5" fill="none"/></svg>
<div class="t" style="left:1862px;top:629px;font-size:15px;color:#444">출력수</div>
<div class="a" style="left:1913px;top:622px;width:62px;height:29px;border:1.5px solid #cfcfcf;background:#fff"></div>
<div class="t" style="left:1920px;top:628.5px;font-size:15.5px;color:#333">선택</div>
<svg class="a" style="left:1956px;top:632.5px" width="13" height="8" viewBox="0 0 13 8"><path d="M1 1.2L6.5 6.5L12 1.2" stroke="#333" stroke-width="1.5" fill="none"/></svg>
<div class="a" style="left:301px;top:659px;width:1675px;height:3px;background:#555"></div>
<div class="a" style="left:301px;top:662px;width:1675px;height:39px;background:#f4f4f4;border-bottom:1.5px solid #dcdcdc"></div>
<div class="a" style="left:301px;top:1022px;width:1675px;height:41px;background:#f6f7f4;border:1.5px solid #dcdcdc"></div>
<div class="a" style="left:301px;top:662px;width:1px;height:360px;background:#d6d6d6"></div>
<div class="a" style="left:301px;top:1063px;width:1px;height:220px;background:#d6d6d6"></div>
<div class="a" style="left:347px;top:662px;width:1px;height:360px;background:#d6d6d6"></div>
<div class="a" style="left:347px;top:1063px;width:1px;height:220px;background:#d6d6d6"></div>
<div class="a" style="left:422px;top:662px;width:1px;height:360px;background:#d6d6d6"></div>
<div class="a" style="left:422px;top:1063px;width:1px;height:220px;background:#d6d6d6"></div>
<div class="a" style="left:615px;top:662px;width:1px;height:360px;background:#d6d6d6"></div>
<div class="a" style="left:615px;top:1063px;width:1px;height:220px;background:#d6d6d6"></div>
<div class="a" style="left:1223px;top:662px;width:1px;height:360px;background:#d6d6d6"></div>
<div class="a" style="left:1223px;top:1063px;width:1px;height:220px;background:#d6d6d6"></div>
<div class="a" style="left:1370px;top:662px;width:1px;height:360px;background:#d6d6d6"></div>
<div class="a" style="left:1370px;top:1063px;width:1px;height:220px;background:#d6d6d6"></div>
<div class="a" style="left:1561px;top:662px;width:1px;height:360px;background:#d6d6d6"></div>
<div class="a" style="left:1561px;top:1063px;width:1px;height:220px;background:#d6d6d6"></div>
<div class="a" style="left:1707px;top:662px;width:1px;height:360px;background:#d6d6d6"></div>
<div class="a" style="left:1707px;top:1063px;width:1px;height:220px;background:#d6d6d6"></div>
<div class="a" style="left:1841px;top:662px;width:1px;height:360px;background:#d6d6d6"></div>
<div class="a" style="left:1841px;top:1063px;width:1px;height:220px;background:#d6d6d6"></div>
<div class="a" style="left:1975px;top:662px;width:1px;height:360px;background:#d6d6d6"></div>
<div class="a" style="left:1975px;top:1063px;width:1px;height:220px;background:#d6d6d6"></div>
<div class="t" style="left:347px;top:673px;width:75px;text-align:center;font-size:15.5px;color:#444">이미지</div>
<div class="t" style="left:422px;top:673px;width:193px;text-align:center;font-size:15.5px;color:#444">상품코드</div>
<div class="t" style="left:615px;top:673px;width:608px;text-align:center;font-size:15.5px;color:#444">기본정보</div>
<div class="t" style="left:1223px;top:673px;width:147px;text-align:center;font-size:15.5px;color:#444">가격</div>
<div class="t" style="left:1370px;top:673px;width:191px;text-align:center;font-size:15.5px;color:#444">기타정보</div>
<div class="t" style="left:1561px;top:673px;width:146px;text-align:center;font-size:15.5px;color:#444">배송정보</div>
<div class="t" style="left:1707px;top:673px;width:134px;text-align:center;font-size:15.5px;color:#444">상품상태</div>
<div class="t" style="left:1841px;top:673px;width:134px;text-align:center;font-size:15.5px;color:#444">승인상태</div>
<div class="a" style="left:316px;top:671px;width:19px;height:19px;border:1.5px solid #767676;border-radius:3px;background:#fff"></div>
<div class="a" style="left:301px;top:1032px;width:1px"></div>
<div class="t" style="left:310px;top:1035px;font-size:15.5px;color:#444">등록 카테고리 : <span style="color:#2b7fd4">FOOD&gt;수산물</span> &nbsp; | &nbsp; 전시설정 : <span style="color:#e02020">비공개</span> &nbsp; | &nbsp; 최초등록일 : <span style="font-size:16.6px">2024-04-15 16:32:33</span> / 최근수정일 : <span style="font-size:16.6px">2024-04-15 16:33:46</span></div>
<div class="a" style="left:316px;top:853px;width:19px;height:19px;border:1.5px solid #767676;border-radius:3px;background:#fff"></div>
<svg class="a" style="left:372px;top:804px" width="26" height="44" viewBox="0 0 26 44"><defs><linearGradient id="g1" x1="0" x2="1"><stop offset="0" stop-color="#d9dbe0"/><stop offset=".45" stop-color="#f6f6f7"/><stop offset="1" stop-color="#c6c9cf"/></linearGradient><radialGradient id="g2" cx=".45" cy=".4" r=".6"><stop offset="0" stop-color="#ffffff"/><stop offset="1" stop-color="#e4e4e6"/></radialGradient></defs><path d="M4 10Q5 1 13 1Q21 1 22.5 10L25 37Q25.5 43 13 43Q0.5 43 1 37Z" fill="url(#g1)"/><path d="M5 12Q6 2 13 2Q20.5 2 21.5 11Q21 19 13 20Q5.5 19.5 5 12Z" fill="url(#g2)"/><path d="M5.2 13Q6.5 19.5 13 20.3Q18.5 20 20.5 15.5" stroke="#d79a84" stroke-width="1" fill="none"/><circle cx="13" cy="27.5" r="1.8" fill="#e9e9ec" stroke="#d0d0d4" stroke-width=".5"/></svg>
<div class="a" style="left:362px;top:863px;width:46px;height:29px;border-radius:3px;background:linear-gradient(#2fb0ee,#1497dc);border:1px solid #1283c4;box-shadow:inset 0 1px 0 rgba(255,255,255,.35)"></div>
<div class="t" style="left:362px;top:870px;width:46px;text-align:center;font-size:14.5px;color:#fff">수정</div>
<div class="a" style="left:362px;top:900px;width:46px;height:29px;border-radius:3px;background:linear-gradient(#2fb0ee,#1497dc);border:1px solid #1283c4;box-shadow:inset 0 1px 0 rgba(255,255,255,.35)"></div>
<div class="t" style="left:362px;top:907px;width:46px;text-align:center;font-size:14.5px;color:#fff">복사</div>
<div class="t" style="left:431px;top:810.0px;font-size:15.5px;color:#555;">분류코드</div>
<div class="a" style="left:431px;top:830px;width:170px;height:33px;border:1.5px solid #cfcfcf;background:#fff"></div>
<div class="t" style="left:437px;top:837.0px;font-size:19px;color:#111">10201300000000</div>
<div class="t" style="left:431px;top:875.0px;font-size:15.5px;color:#555;">상품코드</div>
<div class="a" style="left:431px;top:896px;width:170px;height:32px;border:1.5px solid #cfcfcf;background:#fff"></div>
<div class="t" style="left:437px;top:902.5px;font-size:19px;color:#111">G1000074065</div>
<div class="t" style="left:623px;top:782.0px;font-size:15.5px;color:#555;">매칭타입</div>
<div class="t" style="left:623px;top:804.0px;font-size:15.5px;color:#e01e1e;font-weight:bold;">선택매칭</div>
<div class="t" style="left:623px;top:837.0px;font-size:15.5px;color:#555;">상품명</div>
<div class="a" style="left:623px;top:858px;width:450px;height:31px;border:1.5px solid #cfcfcf;background:#fff"></div>
<div class="t" style="left:629px;top:864.0px;font-size:19px;color:#111">파나소닉 페이셜 스티머 EHXS01</div>
<div class="t" style="left:623px;top:903.0px;font-size:15.5px;color:#555;">키워드</div>
<div class="a" style="left:623px;top:923px;width:450px;height:32px;border:1.5px solid #cfcfcf;background:#fff"></div>
<div class="t" style="left:1231px;top:720.0px;font-size:15.5px;color:#555;">소비자가</div>
<div class="t" style="left:1231px;top:744.5px;width:121px;text-align:right;font-size:19px;color:#111">150,000</div>
<div class="t" style="left:1231px;top:782.3px;font-size:15.5px;color:#555;">인터넷최저가</div>
<div class="t" style="left:1231px;top:806.8px;width:121px;text-align:right;font-size:19px;color:#111">150,000</div>
<div class="t" style="left:1231px;top:844.6px;font-size:15.5px;color:#555;">공동구매가</div>
<div class="t" style="left:1231px;top:869.1px;width:121px;text-align:right;font-size:19px;color:#111">120,000</div>
<div class="t" style="left:1231px;top:906.9px;font-size:15.5px;color:#555;">공급가</div>
<div class="t" style="left:1231px;top:931.4px;width:121px;text-align:right;font-size:19px;color:#111">78,000</div>
<div class="t" style="left:1231px;top:969.2px;font-size:15.5px;color:#555;">협찬가</div>
<div class="t" style="left:1231px;top:993.7px;width:121px;text-align:right;font-size:19px;color:#111">96,000</div>
<div class="t" style="left:1378px;top:783.0px;font-size:15.5px;color:#555;">인플루언서 수수료</div>
<div class="t" style="left:1378px;top:805.0px;font-size:16.6px;color:#555;">20.00%</div>
<div class="t" style="left:1378px;top:837.5px;font-size:15.5px;color:#555;">본사수수료</div>
<div class="t" style="left:1378px;top:859.0px;font-size:16.6px;color:#555;">15%</div>
<div class="t" style="left:1378px;top:892.0px;font-size:15.5px;color:#555;">공동구매 진행기간</div>
<div class="t" style="left:1378px;top:913.6px;font-size:16.6px;color:#555;">2024-04-15 16:32:33</div>
<div class="t" style="left:1378px;top:934.8px;font-size:16.6px;color:#555;">~ 2286-11-21 02:46:39</div>
<div class="t" style="left:1569px;top:813.0px;font-size:15.5px;color:#555;">배송정책</div>
<div class="a" style="left:1569px;top:833px;width:130px;height:26px;border:1.5px solid #cfcfcf;background:#fff"></div>
<div class="t" style="left:1576px;top:838.0px;font-size:15.5px;color:#333">무료배송</div>
<svg class="a" style="left:1680px;top:842.0px" width="13" height="8" viewBox="0 0 13 8"><path d="M1 1.2L6.5 6.5L12 1.2" stroke="#333" stroke-width="1.5" fill="none"/></svg>
<div class="t" style="left:1569px;top:873.0px;font-size:15.5px;color:#555;">묶음배송수량</div>
<div class="a" style="left:1569px;top:893px;width:127px;height:32px;border:1.5px solid #cfcfcf;background:#fff"></div>
<div class="t" style="left:1569px;top:899.5px;width:118px;text-align:right;font-size:19px;color:#111">0</div>
<div class="t" style="left:1716px;top:846.0px;font-size:15.5px;color:#555;">품절/단종</div>
<div class="a" style="left:1716px;top:867px;width:78px;height:25px;border:1.5px solid #cfcfcf;background:#fff"></div>
<div class="t" style="left:1723px;top:871.5px;font-size:15.5px;color:#333">단종</div>
<svg class="a" style="left:1775px;top:875.5px" width="13" height="8" viewBox="0 0 13 8"><path d="M1 1.2L6.5 6.5L12 1.2" stroke="#333" stroke-width="1.5" fill="none"/></svg>
<div class="t" style="left:1841px;top:837px;width:134px;text-align:center;font-size:15.5px;color:#e01e1e">승인대기</div>
<div class="a" style="left:1864px;top:859px;width:88px;height:28px;border-radius:3px;background:linear-gradient(#f27088,#dc4560);border:1px solid #c93a52"></div>
<div class="t" style="left:1864px;top:866px;width:88px;text-align:center;font-size:14.5px;color:#fff">승인대기중</div>
<div class="a" style="left:316px;top:1215.5px;width:19px;height:19px;border:1.5px solid #767676;border-radius:3px;background:#fff"></div>
<svg class="a" style="left:356px;top:1159px" width="59" height="58" viewBox="0 0 59 58"><rect width="59" height="58" fill="#e9e9ec"/><path d="M5.5 51L17 14L30 51Z" fill="#f2d22a"/><path d="M10 50L18 22L29 50Z" fill="#4a1a10"/><path d="M13 41L18 30L24 38L19 46Z" fill="#d8281a"/><path d="M14 33H23M12 44H26" stroke="#f0c020" stroke-width="1.3"/><rect x="15" y="5" width="5" height="11" rx="1" fill="#e8302a"/><path d="M27.5 24H36L34.5 51H29.5Z" fill="#e0302a"/><path d="M36.3 24H43L41.8 51H37.5Z" fill="#eed021"/><path d="M43 24H50.5L49.3 51H44.3Z" fill="#f39a70"/><path d="M39 30H41M46 30H48" stroke="#8a5a20" stroke-width="1"/></svg>
<div class="a" style="left:362px;top:1225.5px;width:46px;height:29px;border-radius:3px;background:linear-gradient(#2fb0ee,#1497dc);border:1px solid #1283c4;box-shadow:inset 0 1px 0 rgba(255,255,255,.35)"></div>
<div class="t" style="left:362px;top:1232.5px;width:46px;text-align:center;font-size:14.5px;color:#fff">수정</div>
<div class="a" style="left:362px;top:1262.5px;width:46px;height:29px;border-radius:3px;background:linear-gradient(#2fb0ee,#1497dc);border:1px solid #1283c4;box-shadow:inset 0 1px 0 rgba(255,255,255,.35)"></div>
<div class="t" style="left:362px;top:1269.5px;width:46px;text-align:center;font-size:14.5px;color:#fff">복사</div>
<div class="t" style="left:431px;top:1172.5px;font-size:15.5px;color:#555;">분류코드</div>
<div class="a" style="left:431px;top:1192.5px;width:170px;height:33.0px;border:1.5px solid #cfcfcf;background:#fff"></div>
<div class="t" style="left:437px;top:1199.5px;font-size:19px;color:#111">11800000000000</div>
<div class="t" style="left:431px;top:1237.5px;font-size:15.5px;color:#555;">상품코드</div>
<div class="a" style="left:431px;top:1258.5px;width:170px;height:32.0px;border:1.5px solid #cfcfcf;background:#fff"></div>
<div class="t" style="left:437px;top:1265.0px;font-size:19px;color:#111">G1000074064</div>
<div class="t" style="left:623px;top:1144.5px;font-size:15.5px;color:#555;">매칭타입</div>
<div class="t" style="left:623px;top:1166.5px;font-size:15.5px;color:#e01e1e;font-weight:bold;">선택매칭</div>
<div class="t" style="left:623px;top:1199.5px;font-size:15.5px;color:#555;">상품명</div>
<div class="a" style="left:623px;top:1220.5px;width:450px;height:31.0px;border:1.5px solid #cfcfcf;background:#fff"></div>
<div class="t" style="left:629px;top:1226.5px;font-size:19px;color:#111">[플렉스매치] 특허받은 미백치약 2IN1</div>
<div class="t" style="left:623px;top:1265.5px;font-size:15.5px;color:#555;">키워드</div>
<div class="a" style="left:623px;top:1285.5px;width:450px;height:32.0px;border:1.5px solid #cfcfcf;background:#fff"></div>
<div class="t" style="left:1231px;top:1082.5px;font-size:15.5px;color:#555;">소비자가</div>
<div class="t" style="left:1231px;top:1107.0px;width:121px;text-align:right;font-size:19px;color:#111">15,000</div>
<div class="t" style="left:1231px;top:1144.8px;font-size:15.5px;color:#555;">인터넷최저가</div>
<div class="t" style="left:1231px;top:1169.3px;width:121px;text-align:right;font-size:19px;color:#111">11,000</div>
<div class="t" style="left:1231px;top:1207.1px;font-size:15.5px;color:#555;">공동구매가</div>
<div class="t" style="left:1231px;top:1231.6px;width:121px;text-align:right;font-size:19px;color:#111">6,900</div>
<div class="t" style="left:1231px;top:1269.4px;font-size:15.5px;color:#555;">공급가</div>
<div class="t" style="left:1231px;top:1293.9px;width:121px;text-align:right;font-size:19px;color:#111">5,000</div>
<div class="t" style="left:1231px;top:1331.7px;font-size:15.5px;color:#555;">협찬가</div>
<div class="t" style="left:1231px;top:1356.2px;width:121px;text-align:right;font-size:19px;color:#111">5,000</div>
<div class="t" style="left:1378px;top:1145.5px;font-size:15.5px;color:#555;">인플루언서 수수료</div>
<div class="t" style="left:1378px;top:1167.5px;font-size:16.6px;color:#555;">20.00%</div>
<div class="t" style="left:1378px;top:1200.0px;font-size:15.5px;color:#555;">본사수수료</div>
<div class="t" style="left:1378px;top:1221.5px;font-size:16.6px;color:#555;">15%</div>
<div class="t" style="left:1378px;top:1254.5px;font-size:15.5px;color:#555;">공동구매 진행기간</div>
<div class="t" style="left:1378px;top:1276.1px;font-size:16.6px;color:#555;">2024-04-15 14:51:10</div>
<div class="t" style="left:1378px;top:1297.3px;font-size:16.6px;color:#555;">~ 2286-11-21 02:46:39</div>
<div class="t" style="left:1569px;top:1175.5px;font-size:15.5px;color:#555;">배송정책</div>
<div class="a" style="left:1569px;top:1195.5px;width:130px;height:26.0px;border:1.5px solid #cfcfcf;background:#fff"></div>
<div class="t" style="left:1576px;top:1200.5px;font-size:15.5px;color:#333">수량별배송</div>
<svg class="a" style="left:1680px;top:1204.5px" width="13" height="8" viewBox="0 0 13 8"><path d="M1 1.2L6.5 6.5L12 1.2" stroke="#333" stroke-width="1.5" fill="none"/></svg>
<div class="t" style="left:1569px;top:1235.5px;font-size:15.5px;color:#555;">묶음배송수량</div>
<div class="a" style="left:1569px;top:1255.5px;width:127px;height:32.0px;border:1.5px solid #cfcfcf;background:#fff"></div>
<div class="t" style="left:1569px;top:1262.0px;width:118px;text-align:right;font-size:19px;color:#111">20</div>
<div class="t" style="left:1716px;top:1208.5px;font-size:15.5px;color:#555;">품절/단종</div>
<div class="a" style="left:1716px;top:1229.5px;width:78px;height:25.0px;border:1.5px solid #cfcfcf;background:#fff"></div>
<div class="t" style="left:1723px;top:1234.0px;font-size:15.5px;color:#333">판매중</div>
<svg class="a" style="left:1775px;top:1238.0px" width="13" height="8" viewBox="0 0 13 8"><path d="M1 1.2L6.5 6.5L12 1.2" stroke="#333" stroke-width="1.5" fill="none"/></svg>
<div class="t" style="left:1841px;top:1199.5px;width:134px;text-align:center;font-size:15.5px;color:#e01e1e">승인대기</div>
<div class="a" style="left:1864px;top:1221.5px;width:88px;height:28px;border-radius:3px;background:linear-gradient(#f27088,#dc4560);border:1px solid #c93a52"></div>
<div class="t" style="left:1864px;top:1228.5px;width:88px;text-align:center;font-size:14.5px;color:#fff">승인대기중</div>
<div class="a" style="left:1909px;top:1167px;width:82px;height:82px;border-radius:34px;background:#1f1f21;box-shadow:0 3px 10px rgba(0,0,0,.25)"></div>
<svg class="a" style="left:1926px;top:1185px" width="48" height="48" viewBox="0 0 48 48"><path d="M23.5 1A22 22 0 1 0 36 41Q40 43 44.5 45Q43 40 42.5 36A22 22 0 0 0 23.5 1Z" fill="#fff"/><path d="M12.5 23.5Q23.5 34 34.5 23.5" stroke="#1f1f21" stroke-width="6" fill="none" stroke-linecap="butt"/></svg>
<svg class="a" style="left:0;top:1271px" width="12" height="12" viewBox="0 0 12 12"><path d="M0 0Q0 12 12 12H0Z" fill="#05030f"/></svg>
<svg class="a" style="left:2036px;top:1271px" width="12" height="12" viewBox="0 0 12 12"><path d="M12 0Q12 12 0 12H12Z" fill="#05030f"/></svg>
<svg class="a" style="left:0;top:0" width="10" height="10" viewBox="0 0 10 10"><path d="M0 10Q0 0 10 0H0Z" fill="#100c30"/></svg>
<svg class="a" style="left:2038px;top:0" width="10" height="10" viewBox="0 0 10 10"><path d="M10 10Q10 0 0 0H10Z" fill="#100c30"/></svg>
<!--END-->


</body></html>
